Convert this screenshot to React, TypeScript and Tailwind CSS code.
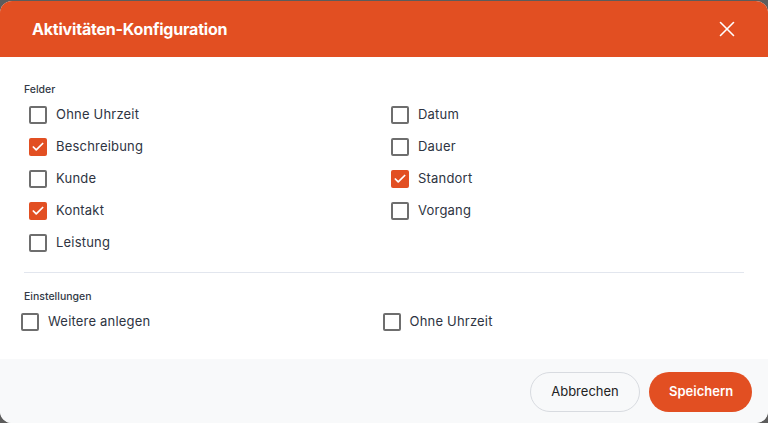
import { X, Check } from "lucide-react";

const felder = [
  { label: "Ohne Uhrzeit", checked: false },
  { label: "Datum", checked: false },
  { label: "Beschreibung", checked: true },
  { label: "Dauer", checked: false },
  { label: "Kunde", checked: false },
  { label: "Standort", checked: true },
  { label: "Kontakt", checked: true },
  { label: "Vorgang", checked: false },
  { label: "Leistung", checked: false },
];

function Box({ checked }: { checked: boolean }) {
  if (checked) {
    return (
      <div className="w-[18px] h-[18px] rounded-[2px] bg-[#e24f22] flex items-center justify-center shrink-0">
        <Check className="w-[14px] h-[14px] text-white" strokeWidth={3} />
      </div>
    );
  }
  return <div className="w-[18px] h-[18px] rounded-[2px] border-2 border-[#6e6e6e] bg-white shrink-0" />;
}

function Row({ label, checked }: { label: string; checked: boolean }) {
  return (
    <div className="flex items-center gap-[9px] h-8">
      <Box checked={checked} />
      <span className="text-[13px] text-[#2e3442] tracking-[0.2px]">{label}</span>
    </div>
  );
}

export default function App() {
  return (
    <div className="w-[768px] h-[423px] bg-[#5c5c5c] pt-px font-['Inter',sans-serif]">
      <div className="h-full flex flex-col rounded-xl overflow-hidden bg-white">
        {/* Header */}
        <div className="h-[56px] bg-[#e24f22] flex items-center justify-between pl-8 pr-[28px] shrink-0">
          <h2 className="text-[16px] font-bold text-white tracking-[-0.2px]">Aktivitäten-Konfiguration</h2>
          <X className="w-[26px] h-[26px] text-white" strokeWidth={1.5} />
        </div>

        {/* Body */}
        <div className="flex-1 px-6 pt-[25px]">
          <div className="text-[10.5px] font-medium text-[#333a46]">Felder</div>
          <div className="grid grid-cols-2 mt-[1px]">
            {felder.map((f) => (
              <div key={f.label} className={f.label === "Datum" || f.label === "Dauer" || f.label === "Standort" || f.label === "Vorgang" ? "pl-[7px]" : "pl-[5px]"}>
                <Row label={f.label} checked={f.checked} />
              </div>
            ))}
          </div>
          <div className="border-t border-[#e2e6ee] mt-[13px]" />
          <div className="text-[10.5px] font-medium text-[#333a46] mt-[16px]">Einstellungen</div>
          <div className="grid grid-cols-2 -ml-[3px] mt-[1px]">
            <Row label="Weitere anlegen" checked={false} />
            <Row label="Ohne Uhrzeit" checked={false} />
          </div>
        </div>

        {/* Footer */}
        <div className="h-16 bg-[#f8f9fa] flex items-center justify-end gap-[9px] pr-4 pt-[2px] shrink-0">
          <button className="h-10 px-5 rounded-full border border-[#d8dbe0] bg-[#f8f9fa] text-[13px] text-[#222] w-[110px]">
            Abbrechen
          </button>
          <button className="h-10 px-5 rounded-full bg-[#e24f22] text-[13px] font-semibold text-white w-[103px]">
            Speichern
          </button>
        </div>
      </div>
    </div>
  );
}
